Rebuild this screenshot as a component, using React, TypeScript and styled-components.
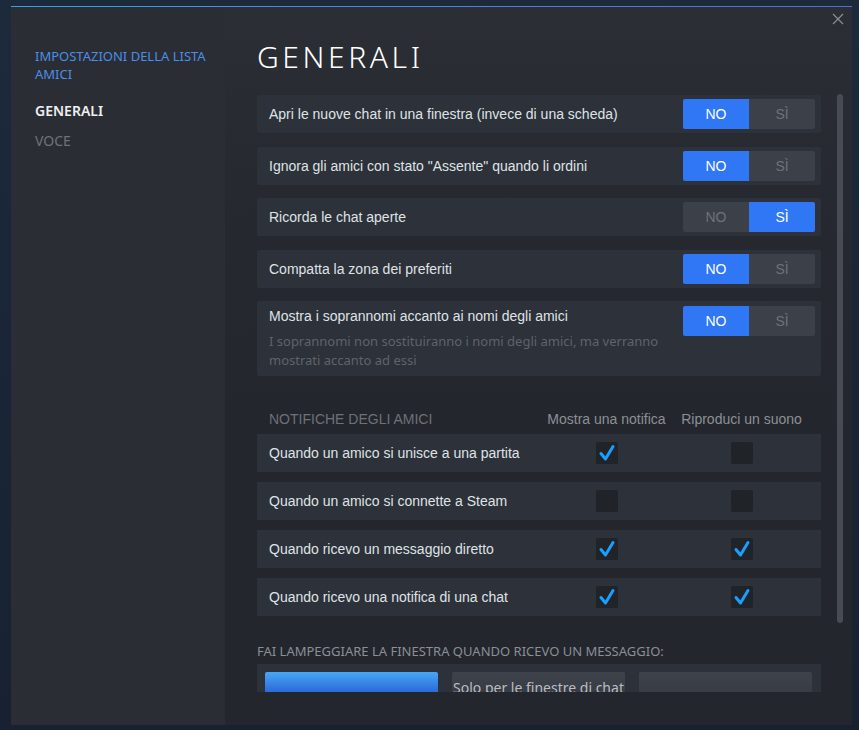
import React from 'react';
import styled, { createGlobalStyle } from 'styled-components';

const GlobalStyle = createGlobalStyle`
  html, body {
    margin: 0;
    padding: 0;
    background: #1a2332;
    overflow: hidden;
  }
  * { box-sizing: border-box; }
`;

const Page = styled.div`
  width: 859px;
  height: 730px;
  padding: 6px 7px 5px 11px;
  background: linear-gradient(180deg, #1c2a3c 0%, #172131 100%);
`;

const Window = styled.div`
  height: 100%;
  display: flex;
  flex-direction: column;
  background: #23262d;
`;

const AccentLine = styled.div`
  height: 1px;
  flex: none;
  background: linear-gradient(90deg, #3aa0e6 0%, #4c7fe0 60%, #4a6fd8 100%);
`;

const Body = styled.div`
  flex: 1;
  display: flex;
  min-height: 0;
`;

const Sidebar = styled.nav`
  width: 214px;
  flex: none;
  background: #2a2d33;
  padding: 40px 12px 0 24px;
  font-family: 'Noto Sans', 'Open Sans', sans-serif;
  font-size: 13px;
  text-transform: uppercase;
`;

const SideHeading = styled.div`
  color: #4a8fe7;
  line-height: 18px;
  margin-bottom: 13px;
`;

const SideItem = styled.div<{ $active?: boolean }>`
  line-height: 30px;
  font-size: 14px;
  color: ${p => (p.$active ? '#eef0f2' : '#6f737a')};
  font-weight: ${p => (p.$active ? 600 : 400)};
`;

const Main = styled.main`
  flex: 1;
  position: relative;
  display: flex;
  flex-direction: column;
  padding: 0 9px 0 32px;
  background: linear-gradient(180deg, #2b2e35 0%, #262930 180px, #23262d 420px);
`;

const CloseButton = styled.button`
  position: absolute;
  top: 2px;
  right: 4px;
  width: 20px;
  height: 20px;
  padding: 0;
  border: none;
  background: none;
  display: flex;
  align-items: center;
  justify-content: center;
`;

const Title = styled.h1`
  margin: 0;
  height: 85px;
  padding-top: 32px;
  font-family: 'Noto Sans', 'Open Sans', sans-serif;
  font-weight: 300;
  font-size: 30px;
  line-height: 36px;
  letter-spacing: 3.6px;
  color: #ffffff;
`;

const ScrollArea = styled.div`
  height: 600px;
  display: flex;
  gap: 16px;
  overflow: hidden;
`;

const Content = styled.div`
  flex: 1;
  padding-top: 3px;
  font-family: 'Liberation Sans', Arial, sans-serif;
  font-size: 14px;
  color: #dfe3e6;
`;

const Track = styled.div`
  width: 6px;
  flex: none;
  padding-top: 2px;
`;

const Thumb = styled.div`
  height: 529px;
  border-radius: 3px;
  background: #464b54;
`;

const SettingRow = styled.div`
  display: flex;
  align-items: center;
  min-height: 38px;
  padding: 0 6px 0 12px;
  margin-bottom: 13.5px;
  background: #2d3139;
  border-radius: 2px;
`;

const TallRow = styled(SettingRow)`
  align-items: flex-start;
  padding: 5px 6px 6px 12px;
`;

const RowText = styled.div`
  flex: 1;
  line-height: 20px;
`;

const Hint = styled.div`
  margin-top: 6px;
  font-family: 'Noto Sans', 'Open Sans', sans-serif;
  font-size: 13px;
  line-height: 19px;
  color: #5f636b;
  padding-right: 20px;
`;

const Toggle = styled.div`
  display: flex;
  flex: none;
  width: 132px;
  height: 30px;
  border-radius: 2px;
  overflow: hidden;
  background: #3c4048;
`;

const ToggleHalf = styled.div<{ $on: boolean }>`
  flex: 1;
  display: flex;
  align-items: center;
  justify-content: center;
  font-size: 14px;
  color: ${p => (p.$on ? '#ffffff' : '#6e727a')};
  background: ${p => (p.$on ? '#2f77f5' : 'transparent')};
`;

const NotifGrid = styled.div`
  display: grid;
  grid-template-columns: 1fr 135px 135px;
  align-items: center;
  padding: 0 12px;
`;

const NotifHeader = styled(NotifGrid)`
  height: 24px;
  padding-top: 3px;
  margin: 29px 0 5px;
  color: #8c9096;
`;

const SectionLabel = styled.div`
  text-transform: uppercase;
  color: #6d7178;
`;

const ColLabel = styled.div`
  text-align: center;
  white-space: nowrap;
`;

const NotifRow = styled(NotifGrid)`
  height: 38px;
  margin-bottom: 10px;
  background: #2d3139;
`;

const CheckCell = styled.div`
  display: flex;
  justify-content: center;
`;

const CheckBox = styled.div`
  width: 22px;
  height: 22px;
  border-radius: 2px;
  background: #202328;
  display: flex;
  align-items: center;
  justify-content: center;
`;

const FlashLabel = styled.div`
  margin-top: 25px;
  font-family: 'Noto Sans', 'Open Sans', sans-serif;
  font-size: 13px;
  line-height: 20px;
  text-transform: uppercase;
  color: #8b8f96;
`;

const FlashBar = styled.div`
  margin-top: 3px;
  display: flex;
  gap: 14px;
  padding: 8px 9px 8px 8px;
  background: #2d3139;
`;

const FlashButton = styled.div<{ $selected?: boolean }>`
  flex: 1;
  height: 30px;
  display: flex;
  align-items: center;
  justify-content: center;
  white-space: nowrap;
  border-radius: 2px;
  font-family: 'Noto Sans', 'Open Sans', sans-serif;
  font-size: 14px;
  color: #b9bdc3;
  background: ${p =>
    p.$selected
      ? 'linear-gradient(180deg, #47a8f5 0%, #2f6fdc 60%, #2a5fc4 100%)'
      : 'linear-gradient(180deg, #3e424b 0%, #353941 100%)'};
`;

const Check = () => (
  <svg width="22" height="22" viewBox="0 0 22 22">
    <path d="M5 11.5 L9.5 17 L17 4.5" fill="none" stroke="#1a9fff" strokeWidth="3" strokeLinecap="round" strokeLinejoin="round" />
  </svg>
);

const toggles = [
  { label: 'Apri le nuove chat in una finestra (invece di una scheda)', on: false },
  { label: 'Ignora gli amici con stato "Assente" quando li ordini', on: false },
  { label: 'Ricorda le chat aperte', on: true },
  { label: 'Compatta la zona dei preferiti', on: false },
];

const notifications = [
  { label: 'Quando un amico si unisce a una partita', show: true, sound: false },
  { label: 'Quando un amico si connette a Steam', show: false, sound: false },
  { label: 'Quando ricevo un messaggio diretto', show: true, sound: true },
  { label: 'Quando ricevo una notifica di una chat', show: true, sound: true },
];

function YesNo({ on }: { on: boolean }) {
  return (
    <Toggle>
      <ToggleHalf $on={!on}>NO</ToggleHalf>
      <ToggleHalf $on={on}>SÌ</ToggleHalf>
    </Toggle>
  );
}

export default function App() {
  return (
    <Page>
      <GlobalStyle />
      <Window>
        <AccentLine />
        <Body>
          <Sidebar>
            <SideHeading>Impostazioni della lista amici</SideHeading>
            <SideItem $active>Generali</SideItem>
            <SideItem>Voce</SideItem>
          </Sidebar>
          <Main>
            <CloseButton type="button" aria-label="chiudi">
              <svg width="12" height="12" viewBox="0 0 12 12">
                <path d="M1 1 L11 11 M11 1 L1 11" stroke="#8b8f95" strokeWidth="1.2" />
              </svg>
            </CloseButton>
            <Title>GENERALI</Title>
            <ScrollArea>
              <Content>
                {toggles.map(t => (
                  <SettingRow key={t.label}>
                    <RowText>{t.label}</RowText>
                    <YesNo on={t.on} />
                  </SettingRow>
                ))}
                <TallRow>
                  <RowText>
                    Mostra i soprannomi accanto ai nomi degli amici
                    <Hint>I soprannomi non sostituiranno i nomi degli amici, ma verranno mostrati accanto ad essi</Hint>
                  </RowText>
                  <YesNo on={false} />
                </TallRow>

                <NotifHeader>
                  <SectionLabel>Notifiche degli amici</SectionLabel>
                  <ColLabel>Mostra una notifica</ColLabel>
                  <ColLabel>Riproduci un suono</ColLabel>
                </NotifHeader>
                {notifications.map(n => (
                  <NotifRow key={n.label}>
                    <div>{n.label}</div>
                    <CheckCell><CheckBox>{n.show && <Check />}</CheckBox></CheckCell>
                    <CheckCell><CheckBox>{n.sound && <Check />}</CheckBox></CheckCell>
                  </NotifRow>
                ))}

                <FlashLabel>Fai lampeggiare la finestra quando ricevo un messaggio:</FlashLabel>
                <FlashBar>
                  <FlashButton $selected />
                  <FlashButton>Solo per le finestre di chat</FlashButton>
                  <FlashButton />
                </FlashBar>
              </Content>
              <Track><Thumb /></Track>
            </ScrollArea>
          </Main>
        </Body>
      </Window>
    </Page>
  );
}
